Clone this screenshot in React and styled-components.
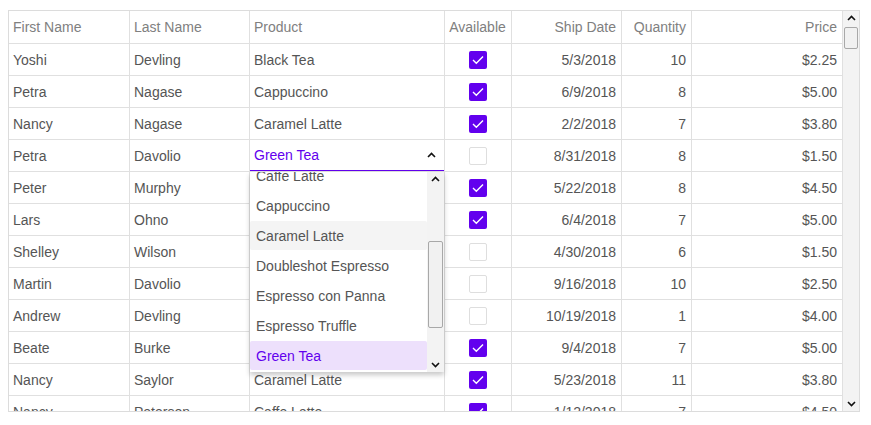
import styled, { createGlobalStyle, css } from "styled-components";

const accent = "#6200ee";
const COLS = "121px 120px 195px 67px 110px 70px 151px";

const GlobalStyle = createGlobalStyle`
  body {
    margin: 0;
    background: #fff;
    font-family: "Liberation Sans", Arial, sans-serif;
  }
`;

const Page = styled.div`
  padding: 10px 8px;
`;

const Grid = styled.div`
  width: 852px;
  height: 402px;
  box-sizing: border-box;
  border: 1px solid #dcdcdc;
  display: flex;
  position: relative;
  font-size: 14px;
`;

const TableArea = styled.div`
  width: 834px;
  display: flex;
  flex-direction: column;
  overflow: hidden;
`;

const Row = styled.div`
  display: grid;
  grid-template-columns: ${COLS};
  height: ${(p) => (p.$header ? 33 : 32)}px;
  flex-shrink: 0;
  box-sizing: border-box;
  border-bottom: 1px solid #e0e0e0;
  color: ${(p) => (p.$header ? "#808080" : "#555")};
`;

const Body = styled.div`
  flex: 1;
  overflow: hidden;
  display: flex;
  flex-direction: column;
`;

const Cell = styled.div`
  box-sizing: border-box;
  border-right: 1px solid #e0e0e0;
  padding: 0 5px 0 4px;
  display: flex;
  align-items: center;
  white-space: nowrap;
  overflow: hidden;
  justify-content: ${(p) =>
    p.$align === "right" ? "flex-end" : p.$align === "center" ? "center" : "flex-start"};
  position: relative;
`;

const Check = styled.span`
  width: 18px;
  height: 18px;
  box-sizing: border-box;
  border-radius: 2px;
  display: flex;
  align-items: center;
  justify-content: center;
  ${(p) =>
    p.$on
      ? css`
          background: ${accent};
        `
      : css`
          border: 1px solid #dedede;
          background: #fff;
        `}
`;

const Editor = styled.div`
  position: absolute;
  left: 0;
  right: 0;
  top: 0;
  bottom: -1px;
  padding: 0 8px 0 4px;
  display: flex;
  align-items: center;
  justify-content: space-between;
  color: ${accent};
  border-bottom: 2px solid ${accent};
  background: #fff;
`;

const DropList = styled.div`
  position: absolute;
  left: 241px;
  top: 161px;
  width: 194px;
  height: 200px;
  background: #fff;
  box-shadow: 0 3px 5px rgba(0, 0, 0, 0.22);
  display: flex;
  overflow: hidden;
  z-index: 2;
`;

const Items = styled.div`
  flex: 1;
  overflow: hidden;
`;

const ItemsInner = styled.div`
  margin-top: -11px;
`;

const Item = styled.div`
  height: 29px;
  margin-bottom: 1px;
  display: flex;
  align-items: center;
  padding-left: 6px;
  border-radius: 2px;
  color: ${(p) => (p.$selected ? accent : "#555")};
  background: ${(p) => (p.$selected ? "#ede0fc" : p.$hover ? "#f4f4f4" : "transparent")};
`;

const ScrollTrack = styled.div`
  width: ${(p) => p.$w}px;
  flex-shrink: 0;
  background: #f3f3f3;
  display: flex;
  flex-direction: column;
  align-items: center;
  position: relative;
`;

const Arrow = styled.div`
  height: 14px;
  width: 100%;
  display: flex;
  align-items: center;
  justify-content: center;
  margin-top: ${(p) => (p.$down ? "auto" : "0")};
`;

const Thumb = styled.div`
  position: absolute;
  left: 1px;
  right: 1px;
  top: ${(p) => p.$top}px;
  height: ${(p) => p.$h}px;
  box-sizing: border-box;
  border: 1px solid #a8a8a8;
  border-radius: 2px;
  background: #f1f1f1;
`;

const Chevron = ({ down }) => (
  <svg width="9" height="6" viewBox="0 0 9 6">
    <polyline
      points={down ? "1,1 4.5,4.5 8,1" : "1,5 4.5,1.5 8,5"}
      fill="none"
      stroke="#111"
      strokeWidth="1.6"
    />
  </svg>
);

const Tick = () => (
  <svg width="12" height="10" viewBox="0 0 12 10">
    <polyline points="1,5 4.3,8.2 11,1.5" fill="none" stroke="#fff" strokeWidth="1.4" />
  </svg>
);

// product cells under the open list are left blank: the list covers them
const rows = [
  ["Yoshi", "Devling", "Black Tea", true, "5/3/2018", 10, "$2.25"],
  ["Petra", "Nagase", "Cappuccino", true, "6/9/2018", 8, "$5.00"],
  ["Nancy", "Nagase", "Caramel Latte", true, "2/2/2018", 7, "$3.80"],
  ["Petra", "Davolio", "", false, "8/31/2018", 8, "$1.50"],
  ["Peter", "Murphy", "", true, "5/22/2018", 8, "$4.50"],
  ["Lars", "Ohno", "", true, "6/4/2018", 7, "$5.00"],
  ["Shelley", "Wilson", "", false, "4/30/2018", 6, "$1.50"],
  ["Martin", "Davolio", "", false, "9/16/2018", 10, "$2.50"],
  ["Andrew", "Devling", "", false, "10/19/2018", 1, "$4.00"],
  ["Beate", "Burke", "", true, "9/4/2018", 7, "$5.00"],
  ["Nancy", "Saylor", "Caramel Latte", true, "5/23/2018", 11, "$3.80"],
  ["Nancy", "Peterson", "Caffe Latte", true, "1/12/2018", 7, "$4.50"],
];

const products = [
  "Caffe Latte",
  "Cappuccino",
  "Caramel Latte",
  "Doubleshot Espresso",
  "Espresso con Panna",
  "Espresso Truffle",
  "Green Tea",
];

const headers = [
  ["First Name", "left"],
  ["Last Name", "left"],
  ["Product", "left"],
  ["Available", "center"],
  ["Ship Date", "right"],
  ["Quantity", "right"],
  ["Price", "right"],
];

export default function App() {
  return (
    <Page>
      <GlobalStyle />
      <Grid>
        <TableArea>
          <Row $header>
            {headers.map(([h, a]) => (
              <Cell key={h} $align={a}>
                {h}
              </Cell>
            ))}
          </Row>
          <Body>
            {rows.map((r, i) => (
              <Row key={i}>
                <Cell>{r[0]}</Cell>
                <Cell>{r[1]}</Cell>
                <Cell>
                  {r[2]}
                  {i === 3 && (
                    <Editor>
                      <span>Green Tea</span>
                      <Chevron />
                    </Editor>
                  )}
                </Cell>
                <Cell $align="center">
                  <Check $on={r[3]}>{r[3] && <Tick />}</Check>
                </Cell>
                <Cell $align="right">{r[4]}</Cell>
                <Cell $align="right">{r[5]}</Cell>
                <Cell $align="right">{r[6]}</Cell>
              </Row>
            ))}
          </Body>
        </TableArea>
        <ScrollTrack $w={16}>
          <Arrow>
            <Chevron />
          </Arrow>
          <Thumb $top={16} $h={22} />
          <Arrow $down>
            <Chevron down />
          </Arrow>
        </ScrollTrack>
        <DropList>
          <Items>
            <ItemsInner>
              {products.map((p) => (
                <Item key={p} $hover={p === "Caramel Latte"} $selected={p === "Green Tea"}>
                  {p}
                </Item>
              ))}
            </ItemsInner>
          </Items>
          <ScrollTrack $w={17}>
            <Arrow>
              <Chevron />
            </Arrow>
            <Thumb $top={69} $h={87} />
            <Arrow $down>
              <Chevron down />
            </Arrow>
          </ScrollTrack>
        </DropList>
      </Grid>
    </Page>
  );
}
